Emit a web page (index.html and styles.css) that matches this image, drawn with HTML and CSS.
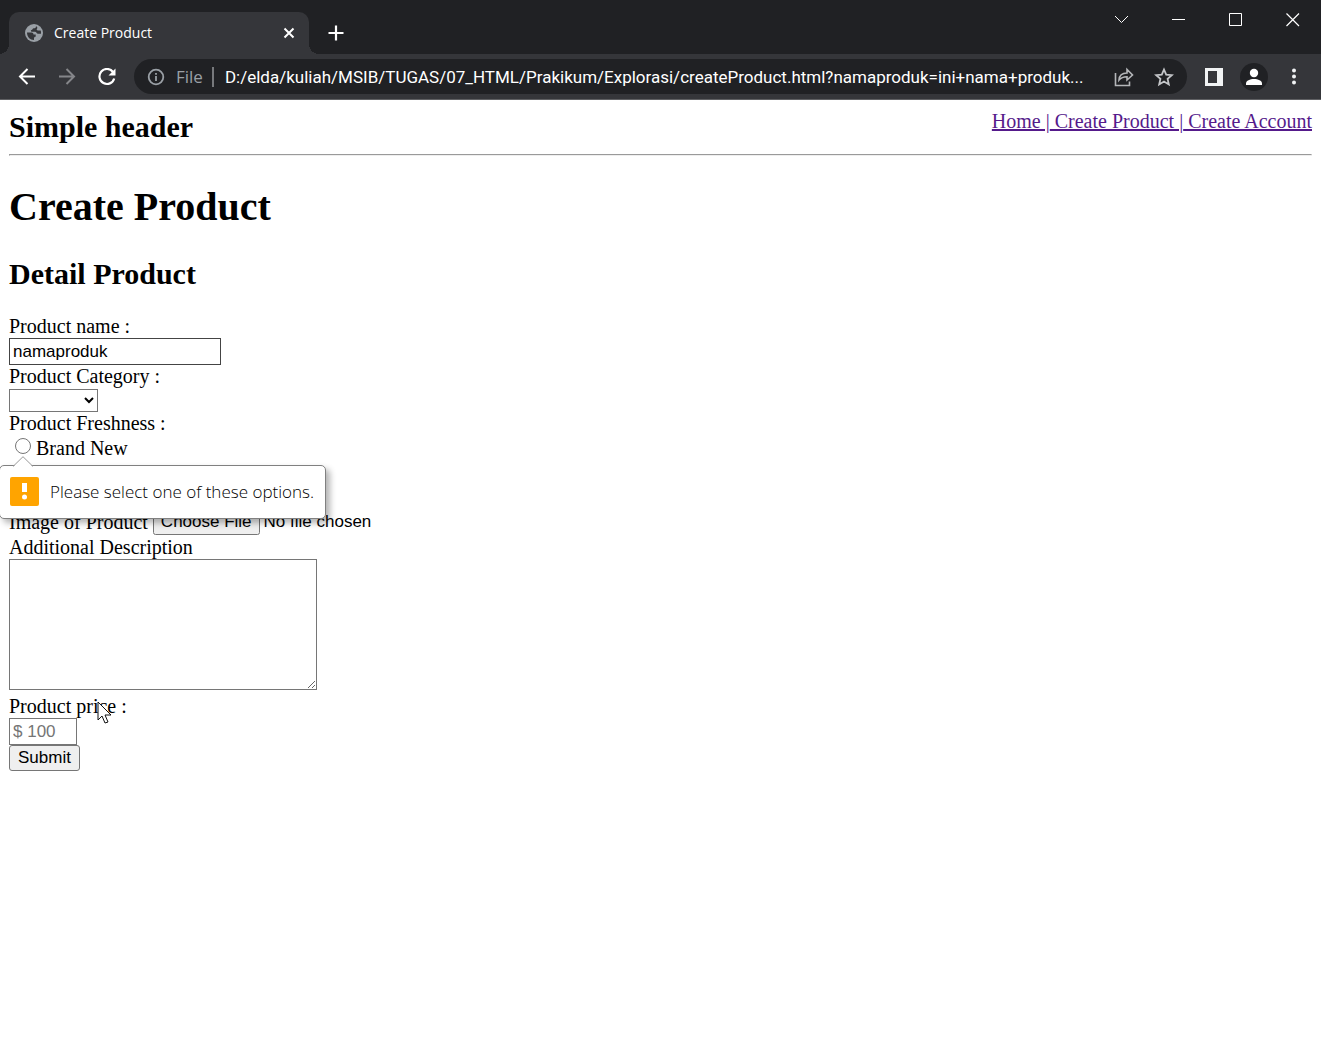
FILE: index.html
```html
<!DOCTYPE html>
<html lang="en">
<head>
<meta charset="utf-8">
<title>Create Product</title>
<link rel="stylesheet" href="styles.css">
</head>
<body>
<div class="browser">
  <div class="tab-strip">
    <div class="tab">
      <svg class="globe" width="18" height="18" viewBox="0 0 18 18"><circle cx="9" cy="9" r="9" fill="#9aa0a6"/><path d="M2 8.500h4.500c1.500 0 2 1 2 2h2.200v2.200c-1.200 0-1.700.6-1.700 1.500V16C5 16 2 13 2 8.500zM11 2.300c0 1.700-1 2-2.300 2-1.200 0-1 1.700-2.200 1.700-1 0-.8 1.700.3 1.700H10c1.500 0 1.500 2 3 2h3c.2-1.200 0-2.200-.3-3.200H13c-1.200 0-1.700-.8-1-1.700.7-.8.500-1.800-1-2.500z" fill="#35363a"/></svg>
      <span class="tab-title">Create Product</span>
      <button class="icon-button tab-close" aria-label="Close tab"><svg width="12" height="12" viewBox="0 0 12 12"><path d="M1.500 1.500l9 9M10.500 1.500l-9 9" stroke="#fff" stroke-width="2"/></svg></button>
    </div>
    <button class="icon-button new-tab" aria-label="New tab"><svg width="16" height="16" viewBox="0 0 16 16"><path d="M8 .5v15M.5 8h15" stroke="#fff" stroke-width="2.200"/></svg></button>
    <div class="window-buttons">
      <button class="icon-button" aria-label="Search tabs"><svg width="14" height="14" viewBox="0 0 14 14"><path d="M0 3l6.500 6.500L13 3" fill="none" stroke="#fff"/></svg></button>
      <button class="icon-button" aria-label="Minimize"><svg width="14" height="14" viewBox="0 0 14 14"><path d="M0 6.500h13" stroke="#fff"/></svg></button>
      <button class="icon-button" aria-label="Maximize"><svg width="14" height="14" viewBox="0 0 14 14"><path d="M.5.500h12v12H.5z" fill="none" stroke="#fff"/></svg></button>
      <button class="icon-button" aria-label="Close"><svg width="14" height="14" viewBox="0 0 14 14"><path d="M.5.500l12.500 12.500M13 .5L.5 13" stroke="#fff" stroke-width="1.200"/></svg></button>
    </div>
  </div>
  <div class="toolbar">
    <button class="icon-button tool" aria-label="Back"><svg width="18" height="18" viewBox="0 0 18 18"><path d="M17 8.500H2M9.500 1L2 8.500 9.500 16" fill="none" stroke="#fff" stroke-width="2"/></svg></button>
    <button class="icon-button tool" aria-label="Forward"><svg width="18" height="18" viewBox="0 0 18 18"><path d="M1 8.500h15M8.500 1L16 8.500 8.500 16" fill="none" stroke="#85868a" stroke-width="2"/></svg></button>
    <button class="icon-button tool" aria-label="Reload"><svg width="18" height="18" viewBox="0 0 18 18"><path d="M15 4A7.500 7.500 0 1 0 16.200 10.500" fill="none" stroke="#fff" stroke-width="2.200"/><path d="M17.500.5v7h-7z" fill="#fff"/></svg></button>
    <div class="omnibox">
      <svg width="18" height="18" viewBox="0 0 18 18"><circle cx="9" cy="9" r="7.300" fill="none" stroke="#9aa0a6" stroke-width="1.800"/><path d="M9 8v5M9 5v1.800" stroke="#9aa0a6" stroke-width="1.800"/></svg>
      <label class="scheme" for="address">File</label>
      <input class="address" id="address" type="text" value="D:/elda/kuliah/MSIB/TUGAS/07_HTML/Prakikum/Explorasi/createProduct.html?namaproduk=ini+nama+produk...">
      <button class="icon-button" aria-label="Share"><svg width="20" height="20" viewBox="0 0 20 20"><path d="M1.500 6v12.500h14v-4M5 13c.3-5 3.500-7 8-7V2.500L18.500 8 13 13V9.700C9 9.700 7 10.500 5 13z" fill="none" stroke="#b4b6b9" stroke-width="1.600"/></svg></button>
      <button class="icon-button" aria-label="Bookmark"><svg width="20" height="20" viewBox="0 0 20 20"><path d="M10 2.500l2.200 5.200 5.600.5-4.200 3.700 1.200 5.500-4.800-2.900-4.800 2.900 1.200-5.500-4.200-3.700 5.600-.5z" fill="none" stroke="#c4c6c9" stroke-width="1.800"/></svg></button>
    </div>
    <button class="icon-button tool" aria-label="Side panel"><svg width="18" height="18" viewBox="0 0 18 18"><path d="M0 0h18v18H0zM3 3v12h9V3z" fill="#f1f3f4" fill-rule="evenodd"/></svg></button>
    <button class="icon-button tool" aria-label="Profile"><svg width="28" height="28" viewBox="0 0 28 28"><circle cx="14" cy="14" r="14" fill="#202124"/><circle cx="14" cy="10" r="4.200" fill="#fff"/><path d="M6 22v-1.500c0-3 4-4.500 8-4.500s8 1.500 8 4.500V22z" fill="#fff"/></svg></button>
    <button class="icon-button tool" aria-label="Menu"><svg width="18" height="18" viewBox="0 0 18 18"><g fill="#f1f3f4"><circle cx="9" cy="2.500" r="2"/><circle cx="9" cy="8.500" r="2"/><circle cx="9" cy="14.500" r="2"/></g></svg></button>
  </div>
</div>
<div class="page">
  <header class="site-header">
    <h2>Simple header</h2>
    <nav><a href="#home">Home |</a><a href="#product"> Create Product |</a><a href="#account"> Create Account</a></nav>
  </header>
  <hr>
  <main>
    <h1>Create Product</h1>
    <h2>Detail Product</h2>
    <form>
      <label for="name">Product name :</label>
      <input class="field name" id="name" type="text" value="namaproduk">
      <label for="category">Product Category :</label>
      <select class="category" id="category"><option></option></select>
      <span>Product Freshness :</span>
      <div class="choice">
        <input id="brand-new" type="radio" name="freshness"><label for="brand-new">Brand New</label>
        <div class="bubble" role="alert">
          <svg class="bubble-arrow" width="22" height="11" viewBox="0 0 22 11"><path d="M1 11L11 .7 21 11z" fill="#fff"/><path d="M1 10.500L11 .7 21 10.500" fill="none" stroke="#999"/></svg>
          <svg width="29" height="29" viewBox="0 0 29 29"><rect width="29" height="29" rx="2" fill="#ffa400"/><path d="M12 6h5v9h-5z" fill="#fff"/><circle cx="14.500" cy="20" r="2.500" fill="#fff"/></svg>
          <span class="bubble-text">Please select one of these options.</span>
        </div>
      </div>
      <div class="upload">
        <label for="image">Image of Product</label>
        <input id="image" type="file">
      </div>
      <label for="description">Additional Description</label>
      <textarea id="description"></textarea>
      <div class="price-label">
        <label for="price">Product price :</label>
        <svg class="cursor" width="16" height="24" viewBox="0 0 16 24"><path d="M1 1v18l4-4 3 7 3-1-3-7h6z" fill="#fff" stroke="#111"/></svg>
      </div>
      <input class="field price" id="price" type="text" placeholder="$ 100">
      <button class="submit" type="submit">Submit</button>
    </form>
  </main>
</div>
</body>
</html>
```
FILE: styles.css
```css
* { box-sizing: border-box; }
body {
  margin: 0;
  background: #fff;
  color: #000;
  font: 20px/22px "Liberation Serif", serif;
}
svg { display: block; flex: none; }

/* Browser window */
.browser {
  background: #202124;
  color: #fff;
  font-family: "Open Sans", sans-serif;
}
.icon-button {
  display: flex;
  align-items: center;
  justify-content: center;
  flex: none;
  padding: 0;
  border: 0;
  background: none;
}
.tab-strip {
  display: flex;
  height: 54px;
  padding: 12px 0 0 9px;
}
.tab {
  position: relative;
  display: flex;
  align-items: center;
  width: 300px;
  padding: 0 14px 0 16px;
  border-radius: 10px 10px 0 0;
  background: #35363a;
}
.tab::before,
.tab::after {
  content: "";
  position: absolute;
  bottom: 0;
  width: 10px;
  height: 10px;
}
.tab::before {
  right: 100%;
  background: radial-gradient(circle at 0 0, transparent 10px, #35363a 10px);
}
.tab::after {
  left: 100%;
  background: radial-gradient(circle at 100% 0, transparent 10px, #35363a 10px);
}
.tab-title {
  flex: 1;
  margin-left: 11px;
  font-size: 14px;
}
.new-tab { width: 54px; }
.window-buttons {
  display: flex;
  height: 16px;
  margin-left: auto;
}
.window-buttons .icon-button { width: 57px; }
.toolbar {
  display: flex;
  align-items: center;
  height: 46px;
  padding: 0 13px;
  gap: 12px;
  border-bottom: 1px solid #5f6063;
  background: #35363a;
}
.tool { width: 28px; }
.omnibox {
  display: flex;
  flex: 1;
  align-items: center;
  min-width: 0;
  height: 35px;
  margin: 0 1px;
  padding: 0 13px;
  gap: 20px;
  border-radius: 18px;
  background: #202124;
}
.scheme {
  margin: 0 -9px;
  padding-right: 9px;
  border-right: 2px solid #77797c;
  color: #9aa0a6;
  font-size: 17px;
  line-height: 20px;
}
.address {
  flex: 1;
  min-width: 0;
  margin-right: -10px;
  padding: 0;
  border: 0;
  outline: 0;
  background: none;
  color: #fff;
  font: 17px Roboto, sans-serif;
}

/* Page */
.page { padding: 10px 9px; }
h1, h2 { margin: 0; }
h1 { font-size: 40px; line-height: 46px; }
h2 { font-size: 30px; line-height: 34px; }
.site-header {
  display: flex;
  justify-content: space-between;
}
nav { white-space: nowrap; }
nav a { color: #551a8b; }
hr { margin: 10px 0 28px; }
main h2 { margin: 27px 0 24px; }
form {
  display: flex;
  flex-direction: column;
  align-items: flex-start;
}
input, select, textarea, .submit {
  margin: 0;
  font: 17px "Liberation Sans", sans-serif;
}
.field {
  height: 27px;
  padding: 1px 3px;
  border: 1px solid #767676;
}
.name {
  width: 212px;
  margin: 1px 0 0;
  border-color: #444;
}
.category {
  width: 89px;
  height: 23px;
  margin: 2px 0 0;
  border: 1px solid #767676;
  background: #fff;
}
.choice {
  position: relative;
  display: flex;
  align-items: center;
  height: 25px;
  margin: 1px 0 49px;
  padding-left: 6px;
  gap: 5px;
}
.choice input {
  width: 16px;
  height: 16px;
  margin-bottom: 3px;
}
.bubble {
  position: absolute;
  z-index: 1;
  top: 30px;
  left: -10px;
  display: flex;
  align-items: center;
  height: 54px;
  padding: 0 11px 2px 10px;
  gap: 11px;
  border: 1px solid #808080;
  border-radius: 5px;
  background: #fff;
  box-shadow: 4px 4px 6px rgba(0, 0, 0, 0.3);
  color: #000;
  font: 300 17px/24px "Open Sans", sans-serif;
  white-space: nowrap;
}
.bubble-arrow {
  position: absolute;
  bottom: 100%;
  left: 12px;
  margin-bottom: -1px;
}
.bubble-text { padding-top: 2px; }
.upload {
  display: flex;
  align-items: center;
  height: 26px;
  margin-bottom: 1px;
  gap: 5px;
}
textarea {
  width: 308px;
  height: 131px;
  margin: 1px 0 5px;
  border: 1px solid #767676;
}
.price-label { position: relative; }
.cursor {
  position: absolute;
  top: 6px;
  left: 88px;
}
.price {
  width: 68px;
  margin-top: 1px;
}
.price::placeholder { color: #757575; }
.submit {
  height: 26px;
  padding: 0 8px;
  border: 1px solid #767676;
  border-radius: 3px;
  background: #efefef;
  color: #000;
}
```
